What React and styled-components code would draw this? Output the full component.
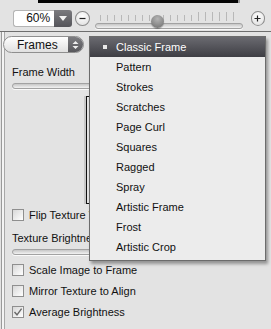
import React from 'react';
import styled, { createGlobalStyle } from 'styled-components';

const GlobalStyle = createGlobalStyle`
    html, body {
        margin: 0;
        padding: 0;
        background: #e3e3e3;
    }
    body {
        font-family: Tahoma, "Liberation Sans", Arial, sans-serif;
        font-size: 11px;
        color: #111;
    }
`;

const items = [
    'Classic Frame',
    'Pattern',
    'Strokes',
    'Scratches',
    'Page Curl',
    'Squares',
    'Ragged',
    'Spray',
    'Artistic Frame',
    'Frost',
    'Artistic Crop',
];

const ticks = Array.from({ length: 20 }, (_, i) => i);

function Checkbox({ checked }) {
    return (
        <Box>
            {checked && (
                <svg width="10" height="10" viewBox="0 0 10 10">
                    <path d="M1.5 5 L4 7.8 L8.6 1.6" fill="none" stroke="#6a6a6a" strokeWidth="1.4" />
                </svg>
            )}
        </Box>
    );
}

function CheckRow({ label, checked }) {
    return (
        <CheckLine>
            <Checkbox checked={checked} />
            <span>{label}</span>
        </CheckLine>
    );
}

export default function App() {
    return (
        <Panel>
            <GlobalStyle />
            <TopStrip>
                <PreviewEdge />
            </TopStrip>
            <Toolbar>
                <ZoomField>
                    <ZoomValue>60%</ZoomValue>
                    <ZoomButton>
                        <svg width="8" height="5" viewBox="0 0 8 5">
                            <path d="M0 0 H8 L4 5 Z" fill="#f2f2f2" />
                        </svg>
                    </ZoomButton>
                </ZoomField>
                <RoundButton>
                    <svg width="7" height="7" viewBox="0 0 7 7">
                        <path d="M0.5 3.5 H6.5" stroke="#222" strokeWidth="1.2" />
                    </svg>
                </RoundButton>
                <ZoomSlider>
                    <Ticks>
                        {ticks.map((i) => (
                            <Tick key={i} $tall={i > 13} />
                        ))}
                    </Ticks>
                    <Track $width="146px" />
                    <Thumb />
                </ZoomSlider>
                <RoundButton>
                    <svg width="7" height="7" viewBox="0 0 7 7">
                        <path d="M0.5 3.5 H6.5 M3.5 0.5 V6.5" stroke="#222" strokeWidth="1.2" />
                    </svg>
                </RoundButton>
            </Toolbar>
            <Body>
                <Select>
                    <SelectLabel>Frames</SelectLabel>
                    <SelectCap>
                        <svg width="7" height="10" viewBox="0 0 7 10">
                            <path d="M0.5 4 L3.5 1 L6.5 4 Z M0.5 6 L3.5 9 L6.5 6 Z" fill="#eee" />
                        </svg>
                    </SelectCap>
                </Select>
                <Label $top="12px">Frame Width</Label>
                <Track $width="120px" />
                <FramePreview />
                <CheckRow label="Flip Texture Vertically" />
                <Label $top="6px">Texture Brightness</Label>
                <Track $width="120px" />
                <Checks>
                    <CheckRow label="Scale Image to Frame" />
                    <CheckRow label="Mirror Texture to Align" />
                    <CheckRow label="Average Brightness" checked />
                </Checks>
                <Menu>
                    {items.map((item, i) => (
                        <MenuItem key={item} $active={i === 0}>
                            <Bullet $active={i === 0} />
                            {item}
                        </MenuItem>
                    ))}
                </Menu>
            </Body>
        </Panel>
    );
}

const Panel = styled.div`
    width: 271px;
    height: 329px;
    overflow: hidden;
    background: #e3e3e3;
    display: flex;
    flex-direction: column;
`;

const TopStrip = styled.div`
    flex-shrink: 0;
    height: 4px;
    display: flex;
    padding-left: 38px;
`;

const PreviewEdge = styled.div`
    width: 200px;
    height: 3px;
    background: #050505;
    border-right: 2px solid #9a9a9a;
`;

const Toolbar = styled.div`
    flex-shrink: 0;
    height: 27px;
    display: flex;
    align-items: center;
    padding: 0 6px 0 13px;
    border-bottom: 1px solid #6e6e6e;
`;

const ZoomField = styled.div`
    display: flex;
    height: 17px;
    width: 62px;
    margin-top: 1px;
`;

const ZoomValue = styled.div`
    flex: 1;
    background: #fff;
    border: 1px solid #b4b4b4;
    border-right: none;
    border-radius: 3px 0 0 3px;
    display: flex;
    align-items: center;
    justify-content: flex-end;
    padding-right: 4px;
    font-size: 12px;
`;

const ZoomButton = styled.div`
    width: 18px;
    background: linear-gradient(#7a7a7e, #55555a);
    border-radius: 0 3px 3px 0;
    display: flex;
    align-items: center;
    justify-content: center;
`;

const RoundButton = styled.div`
    width: 13px;
    height: 13px;
    border-radius: 50%;
    border: 1px solid #8c8c8c;
    background: radial-gradient(circle at 50% 35%, #ffffff, #dcdcdc);
    display: flex;
    align-items: center;
    justify-content: center;
    margin-left: 3px;
    margin-top: 1px;
`;

const ZoomSlider = styled.div`
    position: relative;
    width: 150px;
    height: 24px;
    margin: 0 5px 0 5px;
`;

const Ticks = styled.div`
    display: flex;
    align-items: flex-end;
    gap: 6px;
    height: 10px;
    margin: 5px 0 2px 5px;
`;

const Tick = styled.div`
    width: 1px;
    height: ${(p) => (p.$tall ? '9px' : '6px')};
    background: #b8b8b8;
`;

const Track = styled.div`
    flex-shrink: 0;
    width: ${(p) => p.$width};
    height: 4px;
    border: 1px solid #a2a2a2;
    border-radius: 3px;
    background: linear-gradient(#c6c6c6, #f2f2f2);
    box-shadow: 0 1px 0 #fafafa;
`;

const Thumb = styled.div`
    position: absolute;
    left: 56px;
    top: 9px;
    width: 13px;
    height: 13px;
    border-radius: 50%;
    background: radial-gradient(circle at 50% 30%, #b4b4b4, #6c6c6c);
    box-shadow: 0 1px 1px rgba(0, 0, 0, 0.3);
`;

const Body = styled.div`
    position: relative;
    flex: 1;
    min-height: 0;
    display: flex;
    flex-direction: column;
    padding: 4px 0 0 10px;
    border-left: 1px solid #9a9a9a;
    margin-left: 1px;
    box-shadow: inset 2px 0 0 #f4f4f4, inset 3px 0 0 #a8a8a8;
`;

const Select = styled.div`
    flex-shrink: 0;
    display: flex;
    width: 79px;
    height: 15px;
    margin-left: -9px;
    border: 1px solid #8f8f8f;
    border-radius: 9px;
    overflow: hidden;
    background: linear-gradient(#ffffff, #e0e0e0);
`;

const SelectLabel = styled.div`
    flex: 1;
    display: flex;
    align-items: center;
    padding-left: 13px;
    font-size: 12px;
`;

const SelectCap = styled.div`
    width: 15px;
    background: linear-gradient(#7c7c80, #58585c);
    display: flex;
    align-items: center;
    justify-content: center;
`;

const Label = styled.div`
    flex-shrink: 0;
    height: 14px;
    line-height: 14px;
    margin: ${(p) => p.$top} 0 4px;
    white-space: nowrap;
`;

const FramePreview = styled.div`
    flex-shrink: 0;
    width: 120px;
    height: 106px;
    margin: 7px 0 0 74px;
    border: 1px solid #111;
    border-right: none;
    box-shadow: -2px 0 0 #c8c8c8;
`;

const CheckLine = styled.div`
    flex-shrink: 0;
    display: flex;
    align-items: center;
    gap: 5px;
    height: 21px;
    white-space: nowrap;
`;

const Checks = styled.div`
    display: flex;
    flex-direction: column;
    margin-top: 4px;
`;

const Box = styled.div`
    width: 10px;
    height: 10px;
    border: 1px solid #8f8f8f;
    background: linear-gradient(135deg, #d8d8d8, #ffffff);
    display: flex;
    align-items: center;
    justify-content: center;
`;

const Menu = styled.div`
    position: absolute;
    left: 87px;
    top: 4px;
    width: 175px;
    padding-bottom: 3px;
    background: #ececec;
    border: 1px solid #6c6c6c;
    box-shadow: 2px 3px 3px rgba(0, 0, 0, 0.35);
`;

const MenuItem = styled.div`
    display: flex;
    align-items: center;
    height: 20px;
    padding-left: 26px;
    color: ${(p) => (p.$active ? '#fff' : '#111')};
    background: ${(p) => (p.$active ? 'linear-gradient(#6a6a70, #3e3e44)' : 'transparent')};
    position: relative;
`;

const Bullet = styled.span`
    display: ${(p) => (p.$active ? 'block' : 'none')};
    position: absolute;
    left: 13px;
    top: 8px;
    width: 4px;
    height: 4px;
    background: #e8e8e8;
`;
